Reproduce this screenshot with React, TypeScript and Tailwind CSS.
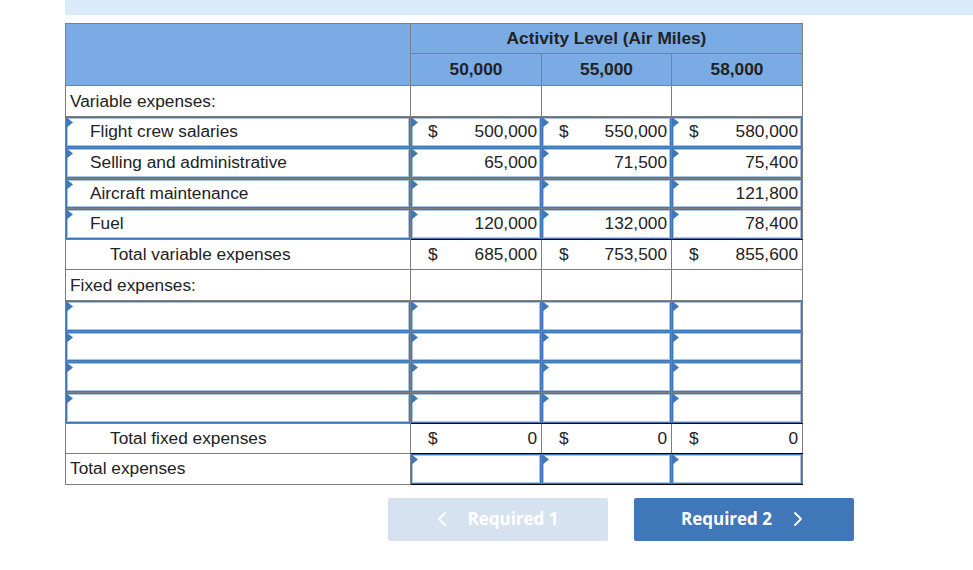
import React from "react";
import { ChevronLeft, ChevronRight } from "lucide-react";

type Money = { sign?: boolean; value?: string };

interface RowData {
  label: string;
  indent?: number;
  kind: "heading" | "input" | "total";
  cells?: Money[];
  height: number;
  blackBottom?: boolean;
}

const rows: RowData[] = [
  { label: "Variable expenses:", kind: "heading", height: 31 },
  {
    label: "Flight crew salaries",
    indent: 1,
    kind: "input",
    height: 31,
    cells: [
      { sign: true, value: "500,000" },
      { sign: true, value: "550,000" },
      { sign: true, value: "580,000" },
    ],
  },
  {
    label: "Selling and administrative",
    indent: 1,
    kind: "input",
    height: 31,
    cells: [{ value: "65,000" }, { value: "71,500" }, { value: "75,400" }],
  },
  {
    label: "Aircraft maintenance",
    indent: 1,
    kind: "input",
    height: 30,
    cells: [{}, {}, { value: "121,800" }],
  },
  {
    label: "Fuel",
    indent: 1,
    kind: "input",
    height: 31,
    blackBottom: true,
    cells: [{ value: "120,000" }, { value: "132,000" }, { value: "78,400" }],
  },
  {
    label: "Total variable expenses",
    indent: 2,
    kind: "total",
    height: 30,
    cells: [
      { sign: true, value: "685,000" },
      { sign: true, value: "753,500" },
      { sign: true, value: "855,600" },
    ],
  },
  { label: "Fixed expenses:", kind: "heading", height: 31 },
  { label: "", kind: "input", height: 31, cells: [{}, {}, {}] },
  { label: "", kind: "input", height: 30, cells: [{}, {}, {}] },
  { label: "", kind: "input", height: 31, cells: [{}, {}, {}] },
  { label: "", kind: "input", height: 31, blackBottom: true, cells: [{}, {}, {}] },
  {
    label: "Total fixed expenses",
    indent: 2,
    kind: "total",
    height: 30,
    blackBottom: true,
    cells: [
      { sign: true, value: "0" },
      { sign: true, value: "0" },
      { sign: true, value: "0" },
    ],
  },
];

const Flag = () => (
  <svg
    className="absolute left-[-1px] top-[-1px] w-[7px] h-[11px]"
    viewBox="0 0 7 11"
  >
    <path d="M0 0L7 5.5L0 11Z" fill="#3f77b9" />
  </svg>
);

const InputBox = ({ children }: { children?: React.ReactNode }) => (
  <div className="relative flex h-full items-center border border-[#3f77b9] bg-white pb-[2px] shadow-[inset_0_0_0_1px_#a9c6ea]">
    <Flag />
    {children}
  </div>
);

const MoneyText = ({ cell }: { cell: Money }) => (
  <div className="flex w-full items-center justify-between pl-[16px] pr-[3px]">
    <span>{cell.sign ? "$" : ""}</span>
    <span>{cell.value}</span>
  </div>
);

const indentClass = (indent?: number) =>
  indent === 2 ? "pl-[44px] pb-[2px]" : indent === 1 ? "pl-[24px]" : "pl-[4px]";

export default function App() {
  return (
    <div className="min-h-[570px] bg-white font-['Liberation_Sans',Arial,sans-serif] text-[17.3px] leading-[24px] text-[#222] overflow-hidden">
      <div className="ml-[65px] h-[15px] bg-[#d9eafb]" />

      <table className="mt-[8px] ml-[65px] w-[738px] table-fixed border-collapse">
        <colgroup>
          <col className="w-[345px]" />
          <col className="w-[131px]" />
          <col className="w-[130px]" />
          <col className="w-[131px]" />
        </colgroup>
        <thead>
          <tr className="h-[30px] bg-[#7aabe4]">
            <th rowSpan={2} className="border border-[#7f7f7f]" />
            <th colSpan={3} className="border border-[#7f7f7f] pb-[2px] font-bold text-center">
              Activity Level (Air Miles)
            </th>
          </tr>
          <tr className="h-[32px] bg-[#7aabe4]">
            <th className="border border-[#7f7f7f] pb-[2px] font-bold text-center">50,000</th>
            <th className="border border-[#7f7f7f] pb-[2px] font-bold text-center">55,000</th>
            <th className="border border-[#7f7f7f] pb-[2px] font-bold text-center">58,000</th>
          </tr>
        </thead>
        <tbody>
          {rows.map((row, i) => (
            <tr key={i} style={{ height: row.height }}>
              <td
                className={
                  row.kind === "input"
                    ? "border border-[#7f7f7f] p-0 h-[inherit]"
                    : `border border-[#7f7f7f] ${indentClass(row.indent)}`
                }
              >
                {row.kind === "input" ? (
                  <InputBox>
                    <span className="pl-[23px]">{row.label}</span>
                  </InputBox>
                ) : (
                  row.label
                )}
              </td>
              {[0, 1, 2].map((c) => (
                <td
                  key={c}
                  className={
                    row.kind === "input"
                      ? row.blackBottom
                        ? "border border-[#7f7f7f] border-b-black p-0 h-[inherit]"
                        : "border border-[#7f7f7f] p-0 h-[inherit]"
                      : row.kind === "total"
                        ? row.blackBottom
                          ? "border border-[#7f7f7f] border-b-black p-0"
                          : "border border-[#7f7f7f] p-0"
                        : "border border-[#7f7f7f] p-0"
                  }
                >
                  {row.kind === "input" ? (
                    <InputBox>
                      <MoneyText cell={row.cells![c]} />
                    </InputBox>
                  ) : row.kind === "total" ? (
                    <div className="flex items-center justify-between pb-[2px] pl-[17px] pr-[4px]">
                      <span>$</span>
                      <span>{row.cells![c].value}</span>
                    </div>
                  ) : null}
                </td>
              ))}
            </tr>
          ))}
          <tr className="h-[31px]">
            <td className="border border-[#7f7f7f] pb-[2px] pl-[4px]">Total expenses</td>
            {[0, 1, 2].map((c) => (
              <td
                key={c}
                className="border border-[#7f7f7f] border-b-black p-0 h-[inherit]"
              >
                <InputBox />
              </td>
            ))}
          </tr>
        </tbody>
      </table>

      <div className="mt-[13px] ml-[388px] flex gap-[26px]">
        <button className="flex h-[43px] w-[220px] items-center justify-center gap-[13px] rounded-[2px] bg-[#d7e2f1] pb-[1px] font-['Open_Sans',sans-serif] text-[17px] font-bold text-white">
          <ChevronLeft size={24} strokeWidth={1.8} className="ml-[-7px]" />
          Required 1
        </button>
        <button className="flex h-[43px] w-[220px] items-center justify-center gap-[14px] rounded-[2px] bg-[#3f77b9] pb-[1px] font-['Open_Sans',sans-serif] text-[17px] font-bold text-white">
          Required 2
          <ChevronRight size={24} strokeWidth={1.8} className="mr-[-3px]" />
        </button>
      </div>
    </div>
  );
}
